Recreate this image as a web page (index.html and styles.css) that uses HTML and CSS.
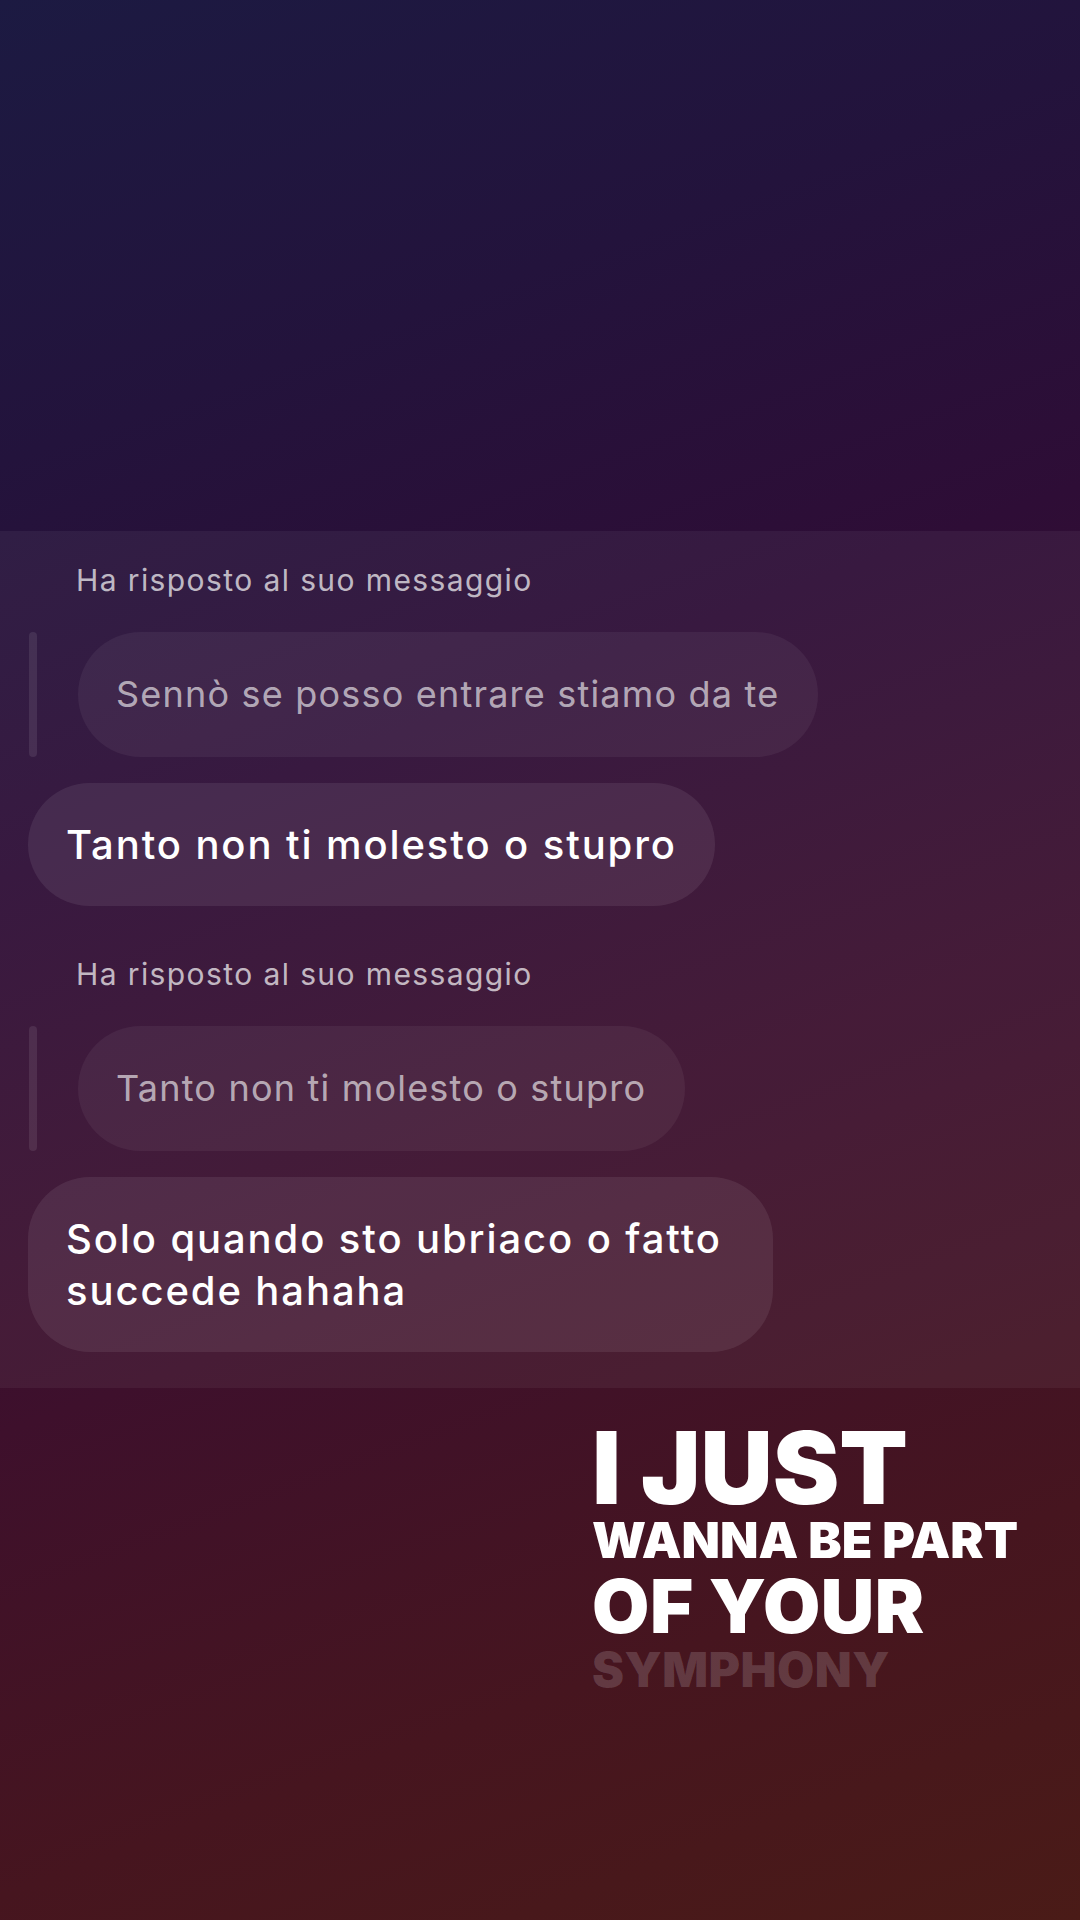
FILE: index.html
```html
<!DOCTYPE html>
<html lang="it">
	<head>
		<meta charset="UTF-8" />
		<meta name="viewport" content="width=device-width, initial-scale=1.0" />
		<title>Story</title>
		<link rel="stylesheet" href="styles.css">
	</head>
	<body>
		<div class="story">
			<div class="top-space"></div>
			<section class="chat">
				<div class="reply-label">Ha risposto al suo messaggio</div>
				<div class="reply-row">
					<span class="reply-bar"></span>
					<div class="quoted">Sennò se posso entrare stiamo da te</div>
				</div>
				<div class="bubble">Tanto non ti molesto o stupro</div>

				<div class="reply-label second">Ha risposto al suo messaggio</div>
				<div class="reply-row">
					<span class="reply-bar"></span>
					<div class="quoted">Tanto non ti molesto o stupro</div>
				</div>
				<div class="bubble">Solo quando sto ubriaco o fatto succede hahaha</div>
			</section>
			<section class="lyrics">
				<div class="line l1">I JUST</div>
				<div class="line l2">WANNA BE PART</div>
				<div class="line l3">OF YOUR</div>
				<div class="line l4 upcoming">SYMPHONY</div>
			</section>
		</div>
	</body>
</html>
```

FILE: styles.css
```css
html,
body {
	margin: 0;
	height: 100%;
}
body {
	width: 1080px;
	height: 1920px;
	overflow: hidden;
	font-family: 'Inter', 'Liberation Sans', sans-serif;
	background:
		linear-gradient(160deg, #1c1a42 0%, #23133c 20%, #2e0d36 38%, #3e102c 62%, #46151f 82%, #4a1b17 100%);
}
.story {
	display: flex;
	flex-direction: column;
	height: 100%;
}
.top-space {
	height: 531px;
	flex-shrink: 0;
}
.chat {
	background: rgba(255, 255, 255, 0.05);
	padding: 32px 0 36px 0;
	display: flex;
	flex-direction: column;
	align-items: flex-start;
}
.reply-label {
	font-size: 30px;
	line-height: 34px;
	letter-spacing: 1.4px;
	color: rgba(255, 255, 255, 0.7);
	margin-left: 76px;
	font-weight: 400;
}
.reply-label.second {
	margin-top: 51px;
}
.reply-row {
	display: flex;
	align-items: stretch;
	gap: 41px;
	margin-top: 35px;
	margin-left: 29px;
}
.reply-bar {
	width: 8px;
	border-radius: 4px;
	background: rgba(255, 255, 255, 0.09);
}
.quoted {
	max-width: 745px;
	box-sizing: border-box;
	padding: 36px 39px 37px 38px;
	border-radius: 63px;
	background: rgba(255, 255, 255, 0.055);
	color: rgba(255, 255, 255, 0.62);
	font-size: 36px;
	line-height: 52px;
	letter-spacing: 1.2px;
}
.bubble {
	max-width: 745px;
	box-sizing: border-box;
	margin: 26px 0 0 28px;
	padding: 36px 38px 35px 38px;
	border-radius: 62px;
	background: rgba(255, 255, 255, 0.08);
	color: #fff;
	font-size: 40px;
	line-height: 52px;
	letter-spacing: 1.9px;
	font-weight: 500;
}
.lyrics {
	padding: 40px 0 0 592px;
	font-weight: 900;
	color: #fff;
}
.line {
	line-height: 0.8;
	white-space: nowrap;
}
.l1 {
	font-size: 100px;
}
.l2 {
	font-size: 50px;
	margin-top: 12px;
}
.l3 {
	font-size: 74px;
	letter-spacing: 0.5px;
	margin-top: 17px;
}
.l4 {
	font-size: 48px;
	letter-spacing: 0.5px;
	margin-top: 15px;
}
.upcoming {
	color: rgba(255, 255, 255, 0.16);
}
```
